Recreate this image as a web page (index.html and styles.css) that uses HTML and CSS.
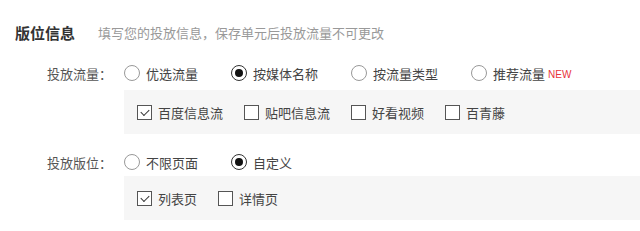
FILE: index.html
```html
<!DOCTYPE html>
<html lang="zh-CN">
<head>
    <meta charset="UTF-8">
    <title>版位信息</title>
    <link rel="stylesheet" href="styles.css">
</head>
<body>
    <div class="header">
        <span class="title">版位信息</span>
        <span class="tip">填写您的投放信息，保存单元后投放流量不可更改</span>
    </div>

    <div class="form">
        <div class="row">
            <div class="label">投放流量：</div>
            <div class="radios">
                <label class="radio"><span class="dot"></span>优选流量</label>
                <label class="radio checked"><span class="dot"></span>按媒体名称</label>
                <label class="radio"><span class="dot"></span>按流量类型</label>
                <label class="radio"><span class="dot"></span>推荐流量<em class="new">NEW</em></label>
            </div>
        </div>
        <div class="options first">
            <label class="check checked"><span class="box"></span>百度信息流</label>
            <label class="check"><span class="box"></span>贴吧信息流</label>
            <label class="check"><span class="box"></span>好看视频</label>
            <label class="check"><span class="box"></span>百青藤</label>
        </div>

        <div class="row second">
            <div class="label">投放版位：</div>
            <div class="radios">
                <label class="radio"><span class="dot"></span>不限页面</label>
                <label class="radio checked"><span class="dot"></span>自定义</label>
            </div>
        </div>
        <div class="options">
            <label class="check checked"><span class="box"></span>列表页</label>
            <label class="check"><span class="box"></span>详情页</label>
        </div>
    </div>
</body>
</html>
```

FILE: styles.css
```css
* {
    box-sizing: border-box;
    margin: 0;
    padding: 0;
}

body {
    font-family: "Noto Sans CJK SC", "Noto Sans", sans-serif;
    background-color: #fff;
    color: #444;
    font-size: 13px;
}

.header {
    padding: 24px 0 0 15px;
    height: 42px;
    line-height: 18px;
    display: flex;
    align-items: center;
}

.title {
    font-size: 15px;
    font-weight: bold;
    color: #333;
    margin-right: 23px;
}

.tip {
    color: #999;
    font-size: 13px;
}

.form {
    margin-top: 17px;
}

.row {
    display: flex;
    align-items: center;
    height: 28px;
}

.row.second {
    margin-top: 14px;
}

.label {
    width: 124px;
    padding-right: 12px;
    text-align: right;
    color: #555;
}

.radios {
    display: flex;
    gap: 33px;
}

.radio {
    display: flex;
    align-items: center;
    color: #444;
}

.dot {
    width: 16px;
    height: 16px;
    border: 1px solid #999;
    border-radius: 50%;
    margin-right: 6px;
    position: relative;
}

.radio.checked .dot {
    border-color: #333;
}

.radio.checked .dot::after {
    content: "";
    position: absolute;
    top: 3px;
    left: 3px;
    width: 8px;
    height: 8px;
    border-radius: 50%;
    background: #111;
}

.new {
    font-style: normal;
    color: #e8333a;
    font-size: 10px;
    font-family: "Liberation Sans", Arial, sans-serif;
    margin-left: 3px;
    margin-top: 2px;
}

.options {
    margin-left: 124px;
    background-color: #f6f6f6;
    height: 44px;
    padding-left: 13px;
    display: flex;
    align-items: center;
    gap: 21px;
}

.options.first {
    margin-top: 3px;
}

.check {
    display: flex;
    align-items: center;
    color: #444;
}

.box {
    width: 15px;
    height: 15px;
    border: 1px solid #555;
    background: #fff;
    margin-right: 6px;
    position: relative;
}

.check.checked .box::after {
    content: "";
    position: absolute;
    left: 3px;
    top: 2px;
    width: 7px;
    height: 4px;
    border-left: 1.5px solid #333;
    border-bottom: 1.5px solid #333;
    transform: translate(0, 1px) rotate(-45deg);
}
```
